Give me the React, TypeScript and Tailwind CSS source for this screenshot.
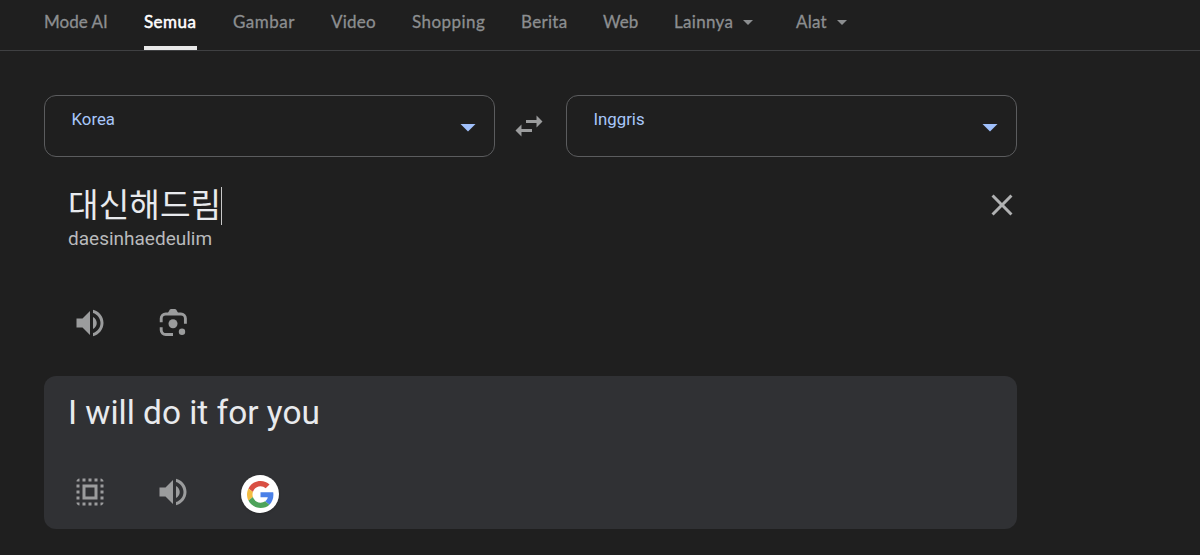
import React from 'react'

const navItems = [
  { label: 'Mode AI', box: 'w-16', text: 'tracking-normal' },
  { label: 'Semua', box: 'w-[53px]', text: 'tracking-[0.45px]', active: true },
  { label: 'Gambar', box: 'w-[62px]', text: 'tracking-[0.5px]' },
  { label: 'Video', box: 'w-[45px]', text: 'tracking-[0.2px]' },
  { label: 'Shopping', box: 'w-[73px]', text: 'tracking-[0.45px]' },
  { label: 'Berita', box: 'w-[46px]', text: 'tracking-[0.3px]' },
  { label: 'Web', box: 'w-[35px]', text: 'tracking-[0.1px]' },
  { label: 'Lainnya', box: 'w-[86px]', text: 'tracking-[0.3px]', menu: true },
  { label: 'Alat', box: 'w-[58px]', text: 'tracking-[0.2px]', menu: true },
]

function Icon({ d, className }: { d: string; className: string }) {
  return (
    <svg viewBox="0 0 24 24" fill="currentColor" className={`shrink-0 ${className}`}>
      <path d={d} />
    </svg>
  )
}

const paths = {
  caret: 'M7 10l5 5 5-5z',
  swap: 'M6.99 11L3 15l3.99 4v-3H14v-2H6.99v-3zM21 9l-3.99-4v3H10v2h7.01v3L21 9z',
  close: 'M19 6.41L17.59 5 12 10.59 6.41 5 5 6.41 10.59 12 5 17.59 6.41 19 12 13.41 17.59 19 19 17.59 13.41 12z',
  volume:
    'M3 9v6h4l5 5V4L7 9H3zm13.5 3c0-1.77-1.02-3.29-2.5-4.03v8.05c1.48-.73 2.5-2.25 2.5-4.02zM14 3.23v2.06c2.89.86 5 3.54 5 6.71s-2.11 5.85-5 6.71v2.06c4.01-.91 7-4.49 7-8.77s-2.99-7.86-7-8.77z',
  selectAll:
    'M3 5h2V3c-1.1 0-2 .9-2 2zm0 8h2v-2H3v2zm4 8h2v-2H7v2zM3 9h2V7H3v2zm10-6h-2v2h2V3zm6 0v2h2c0-1.1-.9-2-2-2zM5 21v-2H3c0 1.1.9 2 2 2zm-2-4h2v-2H3v2zM9 3H7v2h2V3zm2 18h2v-2h-2v2zm8-8h2v-2h-2v2zm0 8c1.1 0 2-.9 2-2h-2v2zm0-12h2V7h-2v2zm0 8h2v-2h-2v2zm-4 4h2v-2h-2v2zm0-16h2V3h-2v2zM7 17h10V7H7v10zm2-8h6v6H9V9z',
}

function LensIcon() {
  return (
    <svg viewBox="0 0 36 36" fill="currentColor" className="size-9 shrink-0">
      <path
        d="M6.2 17.2v-3.7a4.5 4.5 0 0 1 4.5-4.5h15.2a4.5 4.5 0 0 1 4.5 4.5v5.3M6.2 22.2v2.8a4.5 4.5 0 0 0 4.5 4.5H18"
        fill="none"
        stroke="currentColor"
        strokeWidth="2.9"
      />
      <path d="M12.6 8.5l2.1-3.8q.5-.8 1.4-.8h3.8q.9 0 1.4.8l2.1 3.8z" />
      <circle cx="18" cy="18.8" r="4.5" />
      <circle cx="27" cy="26.7" r="3.2" />
    </svg>
  )
}

function GoogleIcon() {
  return (
    <svg viewBox="0 0 48 48" className="size-[27px]">
      <path fill="#d94f43" d="M24 9.5c3.54 0 6.71 1.22 9.21 3.6l6.85-6.85C35.9 2.38 30.47 0 24 0 14.62 0 6.51 5.38 2.56 13.22l7.98 6.19C12.43 13.72 17.74 9.5 24 9.5z" />
      <path fill="#4a80e8" d="M46.98 24.55c0-1.57-.15-3.09-.38-4.55H24v9.02h12.94c-.58 2.96-2.26 5.48-4.78 7.18l7.73 6c4.51-4.18 7.09-10.36 7.09-17.65z" />
      <path fill="#f2bc42" d="M10.53 28.59c-.48-1.45-.76-2.99-.76-4.59s.27-3.14.76-4.59l-7.98-6.19C.92 16.46 0 20.12 0 24c0 3.88.92 7.54 2.56 10.78l7.97-6.19z" />
      <path fill="#4da35a" d="M24 48c6.48 0 11.93-2.13 15.89-5.81l-7.73-6c-2.15 1.45-4.92 2.3-8.16 2.3-6.26 0-11.57-4.22-13.47-9.91l-7.98 6.19C6.51 42.62 14.62 48 24 48z" />
    </svg>
  )
}

function LanguageSelect({ label, className }: { label: string; className: string }) {
  return (
    <button className={`flex h-[62px] items-center justify-between rounded-xl border border-[#5b5c5e] pr-2 pl-[26.5px] text-left ${className}`}>
      <span className="mb-[15px] text-[16.8px] leading-5 text-[#a8c7fa]">{label}</span>
      <Icon d={paths.caret} className="mt-0.5 size-9 text-[#a0c0fb]" />
    </button>
  )
}

export default function App() {
  return (
    <div className="h-[555px] overflow-hidden bg-[#1f1f1f] font-['Roboto','Noto_Sans_CJK_KR',sans-serif] text-[#e8eaed]">
      <nav className="flex h-[51px] gap-9 border-b border-[#3f4042] pl-11 font-['Lato',sans-serif] text-[17px] text-[#8c8e90] [-webkit-text-stroke:0.3px_currentColor]">
        {navItems.map((item) => (
          <a
            key={item.label}
            className={`flex h-[50px] shrink-0 whitespace-nowrap pt-[11px] leading-[22px] ${item.box} ${
              item.active ? 'border-b-4 border-[#e8e8e8] text-white [-webkit-text-stroke:0.5px_currentColor]' : ''
            }`}
          >
            <span className={item.text}>{item.label}</span>
            {item.menu && <Icon d={paths.caret} className="-mt-px ml-[3px] size-6" />}
          </a>
        ))}
      </nav>

      <main className="ml-11 w-[973px] pt-11">
        <div className="flex items-center justify-between">
          <LanguageSelect label="Korea" className="w-[451px]" />
          <Icon d={paths.swap} className="mr-[4px] size-9 text-[#9b9c9d]" />
          <LanguageSelect label="Inggris" className="w-[451px]" />
        </div>

        <section className="flex h-[219px] flex-col pt-[29px] pl-6">
          <div className="flex justify-between">
            <div>
              <div className="flex h-10 items-center">
                <span className="text-[33.3px] leading-10 whitespace-nowrap">대신해드림</span>
                <span className="h-[38px] w-px bg-[#c8c8c8]" />
              </div>
              <p className="text-[19px] leading-[25px] text-[#b9babc]">daesinhaedeulim</p>
            </div>
            <Icon d={paths.close} className="-mr-[3px] mt-px size-9 text-[#b0b1b2]" />
          </div>
          <div className="mt-[54px] flex gap-[47.5px] pl-[3.8px] text-[#9b9c9d]">
            <Icon d={paths.volume} className="size-9" />
            <LensIcon />
          </div>
        </section>

        <section className="h-[153px] rounded-xl bg-[#303134] pt-[17px] pl-6">
          <p className="text-[33.4px] leading-10">I will do it for you</p>
          <div className="mt-[41px] flex items-start pl-1 text-[#9b9c9d]">
            <Icon d={paths.selectAll} className="size-9" />
            <Icon d={paths.volume} className="ml-[47px] size-9" />
            <div className="mt-px ml-[50px] flex size-[38px] items-center justify-center rounded-full bg-white shadow">
              <GoogleIcon />
            </div>
          </div>
        </section>
      </main>
    </div>
  )
}
